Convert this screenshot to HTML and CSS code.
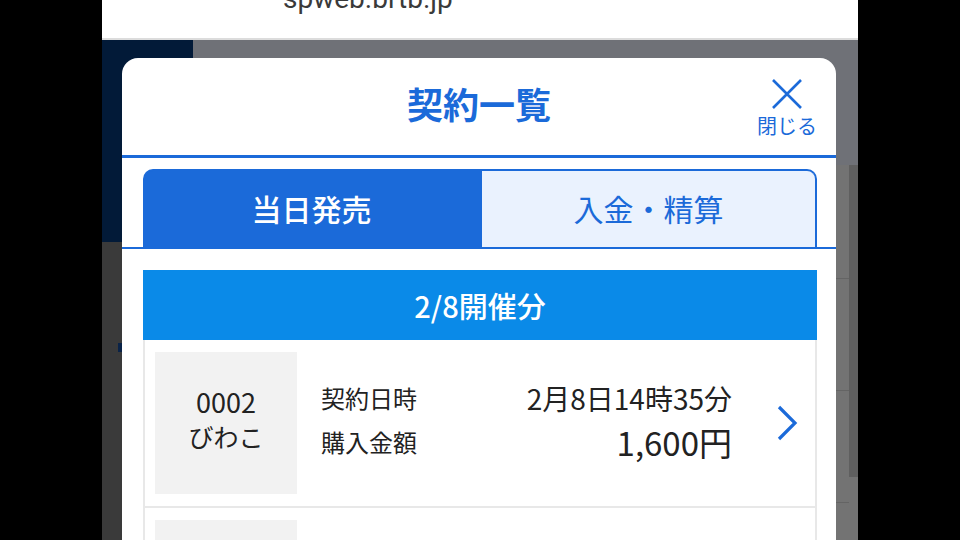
FILE: index.html
```html
<!DOCTYPE html>
<html lang="ja">

<head>
    <meta charset="UTF-8">
    <meta name="viewport" content="width=device-width, initial-scale=1.0">
    <title>契約一覧</title>
    <link rel="stylesheet" href="styles.css">
</head>

<body>
    <div class="phone">
        <div class="urlbar">
            <span class="url">spweb.brtb.jp</span>
        </div>
        <div class="screen">
            <!-- page behind the dialog, dimmed -->
            <div class="page">
                <div class="page-side">
                    <div class="side-head"></div>
                    <div class="side-body">
                        <div class="side-mark"></div>
                    </div>
                </div>
                <div class="page-main">
                    <div class="main-head"></div>
                    <div class="main-list">
                        <div class="main-rows">
                            <div class="main-row"></div>
                            <div class="main-row"></div>
                            <div class="main-row"></div>
                        </div>
                        <div class="main-edge"></div>
                    </div>
                </div>
            </div>

            <div class="modal">
                <div class="modal-head">
                    <h1 class="modal-title">契約一覧</h1>
                    <button class="close">
                        <svg class="close-icon" width="32" height="30" viewBox="0 0 32 30">
                            <path d="M2 1 L30 29 M30 1 L2 29" stroke="#1b6ad9" stroke-width="2.6" fill="none" />
                        </svg>
                        <span class="close-label">閉じる</span>
                    </button>
                </div>

                <div class="tabs">
                    <div class="tab tab-active">当日発売</div>
                    <div class="tab">入金・精算</div>
                </div>

                <div class="content">
                    <div class="day-head">2/8開催分</div>
                    <div class="item">
                        <div class="place">
                            <span class="place-no">0002</span>
                            <span>びわこ</span>
                        </div>
                        <div class="info">
                            <div class="info-row">
                                <span class="label">契約日時</span>
                                <span class="value">2月8日14時35分</span>
                            </div>
                            <div class="info-row">
                                <span class="label">購入金額</span>
                                <span class="value value-big">1,600円</span>
                            </div>
                        </div>
                        <svg class="chevron" width="22" height="36" viewBox="0 0 22 36">
                            <path d="M3 2 L19 18 L3 34" stroke="#1b6ad9" stroke-width="3.2" fill="none" />
                        </svg>
                    </div>
                    <div class="item">
                        <div class="place"></div>
                    </div>
                </div>
            </div>
        </div>
    </div>
</body>

</html>
```

FILE: styles.css
```css
body {
    margin: 0;
    background: #000;
    font-family: "Noto Sans CJK JP", "Noto Sans", sans-serif;
}

.phone {
    width: 756px;
    height: 540px;
    margin: 0 auto;
    overflow: hidden;
    background: #fff;
    display: flex;
    flex-direction: column;
}

.urlbar {
    height: 38px;
    flex-shrink: 0;
    padding-left: 181px;
    overflow: hidden;
    border-bottom: 2px solid #dcdcdc;
}

.url {
    display: block;
    margin-top: -15px;
    font-family: Roboto, sans-serif;
    font-size: 28px;
    line-height: 28px;
    color: #3a3a3a;
}

.screen {
    position: relative;
    flex: 1;
}

/* dimmed page */
.page {
    display: flex;
    height: 100%;
}

.page-side {
    width: 91px;
    display: flex;
    flex-direction: column;
}

.side-head {
    height: 202px;
    background: #021a38;
}

.side-body {
    flex: 1;
    background: #3a3a3a;
    padding-top: 101px;
}

.side-mark {
    width: 4px;
    height: 9px;
    margin-left: 16px;
    background: #0a2348;
}

.page-main {
    flex: 1;
    display: flex;
    flex-direction: column;
    background: #737373;
}

.main-head {
    height: 125px;
    background: #6f7177;
}

.main-list {
    height: 312px;
    display: flex;
}

.main-rows {
    flex: 1;
    padding-top: 113px;
}

.main-row {
    height: 112px;
    border-top: 1px solid #646464;
    box-sizing: border-box;
}

.main-edge {
    width: 9px;
    background: #5f5f5f;
}

/* dialog */
.modal {
    position: absolute;
    top: 18px;
    left: 20px;
    right: 22px;
    bottom: 0;
    background: #fff;
    border-radius: 16px 16px 0 0;
}

.modal-head {
    position: relative;
    height: 97px;
    display: flex;
    align-items: center;
    justify-content: center;
    border-bottom: 3px solid #1b6ad9;
}

.modal-title {
    margin: 0;
    font-size: 36px;
    font-weight: bold;
    line-height: 1;
    color: #1b6ad9;
    margin-top: -7px;
}

.close {
    position: absolute;
    top: 21px;
    right: 18px;
    width: 62px;
    padding: 0;
    border: none;
    background: none;
    display: flex;
    flex-direction: column;
    align-items: center;
    font-family: inherit;
}

.close-label {
    font-size: 20px;
    line-height: 1;
    color: #1b6ad9;
    margin-top: 7px;
}

.tabs {
    display: flex;
    padding: 11px 19px 0 21px;
    border-bottom: 2px solid #1b6ad9;
}

.tab {
    flex: 1;
    height: 78px;
    box-sizing: border-box;
    display: flex;
    align-items: center;
    justify-content: center;
    padding-bottom: 2px;
    font-size: 30px;
    color: #1b6ad9;
    background: #eaf2fe;
    border: 2px solid #1b6ad9;
    border-bottom: none;
    border-radius: 0 10px 0 0;
}

.tab-active {
    color: #fff;
    font-weight: 500;
    background: #1b6ad9;
    border-radius: 10px 0 0 0;
}

.content {
    padding: 21px 19px 0 21px;
}

.day-head {
    height: 70px;
    display: flex;
    align-items: center;
    justify-content: center;
    font-size: 29px;
    font-weight: 500;
    color: #fff;
    background: #0a8ae8;
}

.item {
    display: flex;
    align-items: center;
    padding: 12px 17px 12px 10px;
    border: 2px solid #e8e8e8;
    border-top: none;
}

.place {
    width: 142px;
    height: 142px;
    flex-shrink: 0;
    display: flex;
    flex-direction: column;
    align-items: center;
    justify-content: center;
    padding-bottom: 8px;
    box-sizing: border-box;
    font-size: 25px;
    line-height: 35px;
    color: #222;
    background: #f2f2f2;
}

.place-no {
    font-size: 27px;
}

.info {
    flex: 1;
    padding: 0 44px 6px 24px;
}

.info-row {
    display: flex;
    align-items: center;
    justify-content: space-between;
    height: 44px;
    line-height: 1;
}

.label {
    font-size: 24px;
    color: #222;
}

.value {
    font-size: 28px;
    color: #222;
}

.value-big {
    font-size: 33px;
}
```
